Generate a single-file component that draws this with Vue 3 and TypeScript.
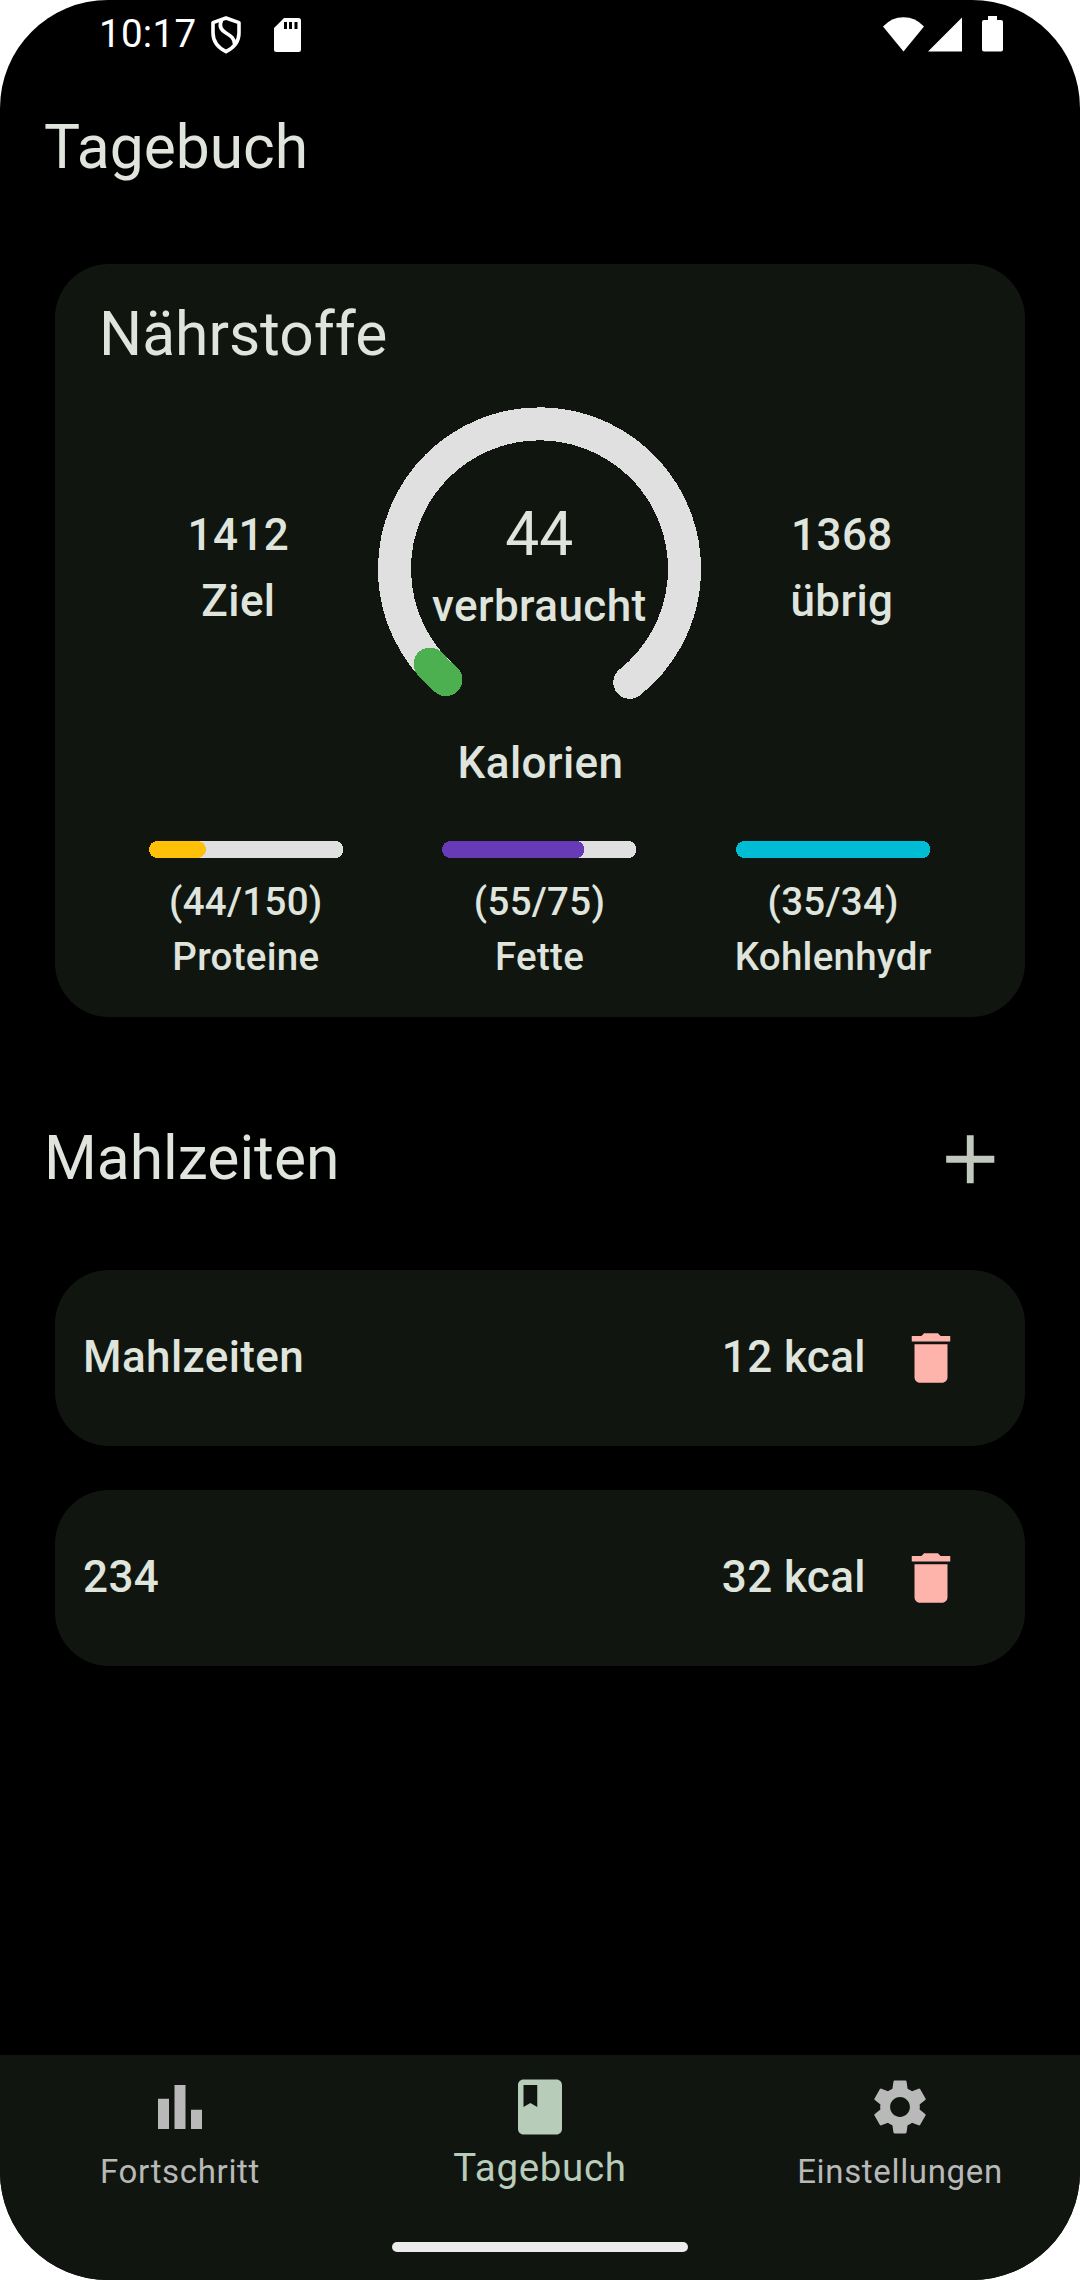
<script setup lang="ts">
interface Nutrient {
  name: string
  value: number
  goal: number
  color: string
  fill: number
}

interface Meal {
  name: string
  kcal: number
}

const nutrients: Nutrient[] = [
  { name: 'Proteine', value: 44, goal: 150, color: '#ffc107', fill: 57 },
  { name: 'Fette', value: 55, goal: 75, color: '#673ab7', fill: 142.5 },
  { name: 'Kohlenhydr', value: 35, goal: 34, color: '#00bcd4', fill: 194.5 },
]

const meals: Meal[] = [
  { name: 'Mahlzeiten', kcal: 12 },
  { name: '234', kcal: 32 },
]

// Point on the gauge circle; degrees run clockwise from straight down.
function point(deg: number): string {
  const a = (deg * Math.PI) / 180
  return `${(161.5 - 145 * Math.sin(a)).toFixed(2)} ${(161.9 + 145 * Math.cos(a)).toFixed(2)}`
}

const track = `M${point(42)}A145 145 0 1 1 ${point(321.5)}`
const progress = `M${point(40.2)}A145 145 0 0 1 ${point(49)}`
</script>

<template>
  <div class="screen">
    <div class="status">
      <span class="time">10:17</span>
      <svg class="shield" width="30" height="38" viewBox="0 0 30 38" fill="none" stroke="#fff" stroke-width="3.6" stroke-linejoin="round">
        <path d="M15 2 2 6.6V17c0 8.300 5 14.600 13 18.700C23 31.600 28 25.300 28 17V6.600z" />
        <path d="M10.500 4.500c-2.500 5-.5 9.500 4.500 12.500s8.500 5.500 8.500 11" />
      </svg>
      <svg class="sd" width="27" height="34" viewBox="0 0 27 34">
        <path fill="#fff" fill-rule="evenodd" d="M10 0h14.500A2.500 2.500 0 0 1 27 2.500v29a2.500 2.500 0 0 1-2.500 2.500h-22A2.500 2.500 0 0 1 0 31.500V10zM10 4v7h3V4zm5 0v7h3V4zm5.500 0v7h3V4z" />
      </svg>
      <svg class="system" width="121" height="36" viewBox="0 0 121 36" fill="#fff">
        <path d="M0 10.500Q8.500 1.300 20.500 1.300T41 10.500L20.500 35.500z" />
        <path d="M79 1.500V35.500H45z" />
        <path d="M105 0h9v4h4a2 2 0 0 1 2 2v27.600a2 2 0 0 1-2 2h-17a2 2 0 0 1-2-2V6a2 2 0 0 1 2-2h4z" />
      </svg>
    </div>

    <header class="header title">Tagebuch</header>

    <section class="card nutrients">
      <h2 class="title">Nährstoffe</h2>
      <div class="calories">
        <div class="stat">
          <span>1412</span>
          <span>Ziel</span>
        </div>
        <div class="gauge">
          <svg width="323" height="323" viewBox="0 0 323 323" fill="none" stroke-width="33" stroke-linecap="round" shape-rendering="crispEdges">
            <path :d="track" stroke="#e0e0e0" />
            <path :d="progress" stroke="#4caf50" />
          </svg>
          <div class="stat">
            <span class="title">44</span>
            <span>verbraucht</span>
          </div>
        </div>
        <div class="stat remaining">
          <span>1368</span>
          <span>übrig</span>
        </div>
      </div>
      <div class="caption">Kalorien</div>
      <div class="bars">
        <div v-for="n in nutrients" :key="n.name" class="nutrient">
          <svg width="194.500" height="17" viewBox="0 0 194.500 17" shape-rendering="crispEdges">
            <rect width="194.500" height="17" rx="8.500" fill="#e0e0e0" />
            <rect :width="n.fill" height="17" rx="8.500" :fill="n.color" />
          </svg>
          <span>({{ n.value }}/{{ n.goal }})</span>
          <span>{{ n.name }}</span>
        </div>
      </div>
    </section>

    <div class="section-head">
      <h2 class="title">Mahlzeiten</h2>
      <svg width="82.500" height="82.500" viewBox="0 0 24 24" fill="#c1c9be">
        <path d="M19 13h-6v6h-2v-6H5v-2h6V5h2v6h6z" />
      </svg>
    </div>

    <div class="meals">
      <div v-for="m in meals" :key="m.name" class="card meal">
        <span class="meal-name">{{ m.name }}</span>
        <span class="meal-kcal">{{ m.kcal }} kcal</span>
        <svg width="66" height="66" viewBox="0 0 24 24" fill="#ffb4ab">
          <path d="M6 19c0 1.100.9 2 2 2h8c1.100 0 2-.9 2-2V7H6zM19 4h-3.500l-1-1h-5l-1 1H5v2h14z" />
        </svg>
      </div>
    </div>

    <nav class="nav">
      <div class="tabs">
        <div class="tab">
          <svg width="66" height="66" viewBox="0 0 24 24" fill="currentColor">
            <path d="M4 9h4v11H4zM16 13h4v7h-4zM10 4h4v16h-4z" />
          </svg>
          <span>Fortschritt</span>
        </div>
        <div class="tab active">
          <svg width="66" height="66" viewBox="0 0 24 24" fill="currentColor">
            <path fill-rule="evenodd" d="M18 2H6c-1.100 0-2 .9-2 2v16c0 1.100.9 2 2 2h12c1.100 0 2-.9 2-2V4c0-1.100-.9-2-2-2zM6 4h5v8l-2.500-1.500L6 12z" />
          </svg>
          <span>Tagebuch</span>
        </div>
        <div class="tab">
          <svg width="66" height="66" viewBox="0 0 24 24" fill="currentColor">
            <path d="M19.140 12.940c.04-.3.06-.61.06-.94 0-.32-.02-.64-.07-.94l2.030-1.580c.18-.14.23-.41.12-.61l-1.920-3.320c-.12-.22-.37-.29-.59-.22l-2.390.96c-.5-.38-1.030-.7-1.620-.94l-.36-2.540c-.04-.24-.24-.41-.48-.41h-3.840c-.24 0-.43.17-.47.41l-.36 2.540c-.59.24-1.130.57-1.620.94l-2.390-.96c-.22-.08-.47 0-.59.22L2.740 8.870c-.12.21-.08.47.12.61l2.030 1.580c-.05.3-.09.63-.09.94s.02.64.07.94l-2.030 1.580c-.18.14-.23.41-.12.61l1.920 3.320c.12.22.37.29.59.22l2.390-.96c.5.38 1.030.7 1.620.94l.36 2.540c.05.24.24.41.48.41h3.840c.24 0 .44-.17.47-.41l.36-2.540c.59-.24 1.130-.56 1.620-.94l2.390.96c.22.08.47 0 .59-.22l1.920-3.320c.12-.22.07-.47-.12-.61zM12 15.600c-1.980 0-3.600-1.620-3.600-3.600s1.620-3.600 3.600-3.600 3.600 1.620 3.600 3.600-1.620 3.600-3.600 3.600z" />
          </svg>
          <span>Einstellungen</span>
        </div>
      </div>
      <div class="home"></div>
    </nav>
  </div>
</template>

<style>
body {
  margin: 0;
  background: #fff;
}
</style>

<style scoped>
.screen {
  display: flex;
  flex-direction: column;
  width: 1080px;
  height: 2280px;
  overflow: hidden;
  border-radius: 108px;
  background: #000;
  color: #dfe4dc;
  font: 500 44px/66px Roboto, "Noto Sans", sans-serif;
  letter-spacing: 0.41px;
}
svg {
  display: block;
  flex: none;
}
.title {
  margin: 0;
  font-size: 60.5px;
  font-weight: 400;
  line-height: 77px;
  letter-spacing: 0;
}
.status {
  display: flex;
  align-items: flex-start;
  height: 66px;
  padding: 0 76px 0 99px;
}
.time {
  width: 112px;
  font-size: 38.5px;
  font-weight: 400;
  line-height: 68px;
  letter-spacing: 0.3px;
  color: #fff;
}
.shield {
  margin-top: 16px;
}
.sd {
  margin: 18px 0 0 33px;
}
.system {
  margin: 16px 0 0 auto;
}
.header {
  display: flex;
  align-items: center;
  height: 162px;
  padding-left: 44px;
}
.card {
  border-radius: 54px;
  background: #101510;
}
.nutrients {
  height: 721px;
  margin: 36px 55px 0;
  padding: 32px 44px 0;
}
.calories {
  display: flex;
  justify-content: space-evenly;
  align-items: center;
  height: 323px;
  margin-top: 34px;
}
.stat {
  display: flex;
  flex-direction: column;
  align-items: center;
  padding-bottom: 2px;
}
.remaining {
  margin: 0 -1px 0 1px;
}
.gauge {
  display: grid;
  place-items: center;
}
.gauge > * {
  grid-area: 1 / 1;
}
.caption {
  padding-left: 1px;
  text-align: center;
}
.bars {
  display: flex;
  margin: 45px 1px 0 -1px;
  font-size: 38.5px;
  line-height: 55px;
  letter-spacing: 0.28px;
}
.nutrient {
  display: flex;
  flex: 1;
  flex-direction: column;
  align-items: center;
}
.nutrient:first-child {
  padding-left: 1px;
}
.nutrient svg {
  margin-bottom: 16px;
}
.section-head {
  display: flex;
  justify-content: space-between;
  align-items: center;
  height: 222px;
  padding: 31px 69px 0 44px;
}
.section-head .title {
  padding-bottom: 2px;
}
.meals {
  display: flex;
  flex-direction: column;
  gap: 44px;
  margin: 0 55px;
}
.meal {
  display: flex;
  align-items: center;
  height: 176px;
  padding: 0 61px 0 28px;
}
.meal-name,
.meal-kcal {
  padding-bottom: 2px;
}
.meal-name {
  flex: 1;
}
.meal svg {
  margin-left: 32px;
}
.nav {
  display: flex;
  flex-direction: column;
  align-items: center;
  height: 225px;
  margin-top: auto;
  background: #101510;
}
.tabs {
  display: flex;
  width: 100%;
  height: 187px;
}
.tab {
  display: flex;
  flex: 1;
  flex-direction: column;
  align-items: center;
  padding-top: 19px;
  color: #b8b9b8;
  font-size: 33px;
  font-weight: 400;
  line-height: 64px;
  letter-spacing: 0.66px;
}
.tab.active {
  color: #b7ccb9;
  font-size: 38.5px;
  line-height: 56px;
}
.home {
  width: 296px;
  height: 10px;
  border-radius: 5px;
  background: #ececec;
}
</style>
